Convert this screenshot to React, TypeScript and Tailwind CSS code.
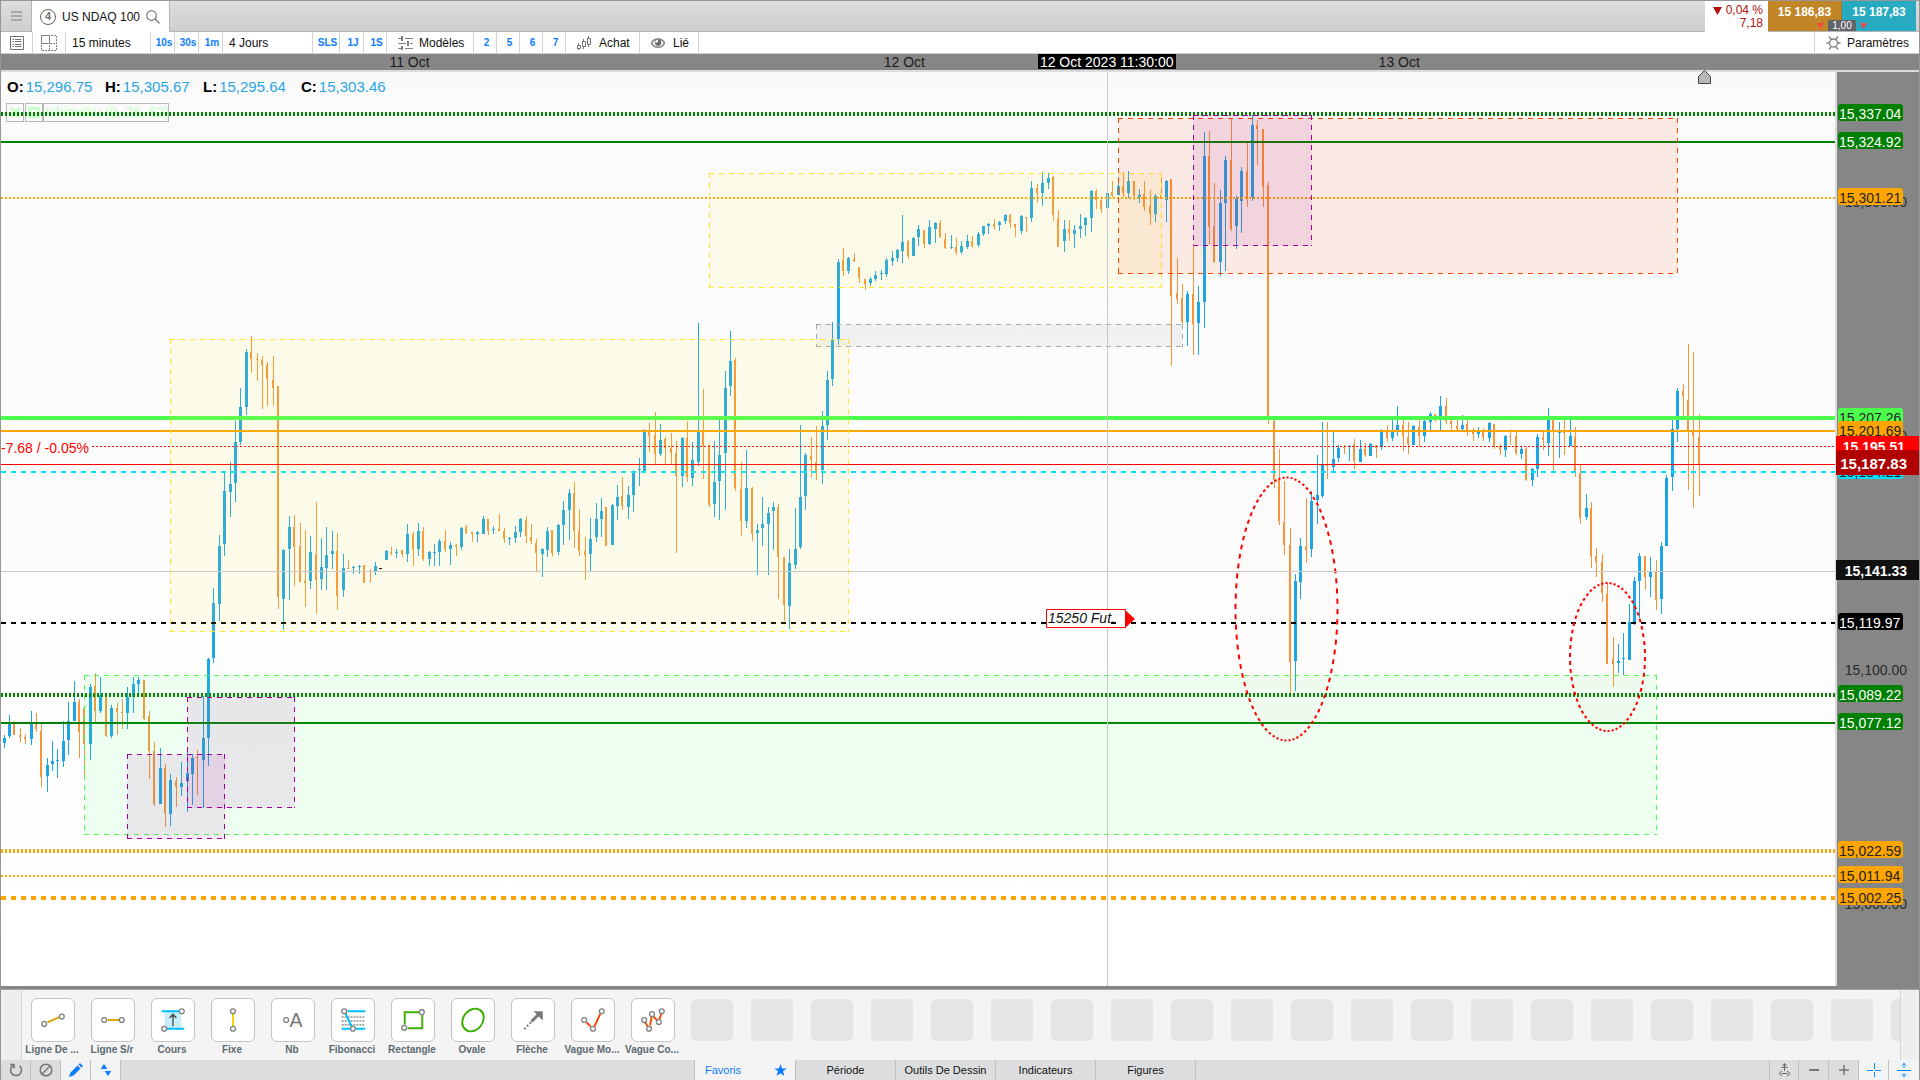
import React from "react";

type Group = { x: number; y: number; sx: number; bars: string };

/* Price bars. Each entry is "direction time high low bodyTop bodyBottom",
   in subunits (three per pixel) from the origin of its group. */
const GROUPS: Group[] = [
  {
    x: 0,
    y: 640,
    sx: 3,
    bars: `U 13 285 323 294 309,U 28 225 293 249 288,D 43 243 285 249 285,D 61 264 306 285 291,D 76 282 312 291 297,
U 94 213 315 249 297,D 109 219 276 249 267,D 124 249 441 273 411,U 142 354 456 375 408,U 157 303 393 363 372,
U 172 327 414 360 363,U 190 243 381 303 363,U 205 186 345 243 300,U 223 123 243 186 243,D 238 177 354 186 276,
D 253 200 414 205 312,U 271 132 360 141 312,D 286 99 247 138 213,U 301 111 219 165 213,D 319 171 291 171 288,
U 334 195 294 204 288,D 352 189 285 204 216,D 367 177 267 216 219,U 382 141 267 171 219,U 400 111 219 132 171,
U 415 111 159 120 132,D 433 120 240 120 237,D 448 213 417 228 333,D 463 306 498 333 492,U 481 324 492 384 492,
D 496 372 561 384 519,U 511 402 558 420 522,D 529 411 501 423 441,U 544 366 468 429 441,U 562 333 516 399 423,
U 577 343 495 354 402,D 592 330 465 351 354,U 610 168 504 294 360,U 625 54 378 57 294`,
  },
  {
    x: 0,
    y: 320,
    sx: 3,
    bars: `U 640 804 1029 849 1014,U 658 645 903 678 852,U 673 456 708 513 672,U 691 426 591 492 516,U 706 303 546 366 489,
U 721 204 375 261 366,U 739 87 285 96 261,D 754 48 159 96 117,D 772 99 183 117 120,D 787 108 267 120 135,
D 802 126 258 135 177,D 820 108 258 180 204,D 835 198 867 198 831,U 850 687 930 690 837,U 868 588 840 621 687,
D 883 585 798 621 681,D 901 609 786 678 786,D 916 630 861 783 789,U 931 648 807 696 783,D 949 546 882 702 780,
U 964 654 810 741 777,U 979 621 810 705 744,U 997 633 747 693 702,D 1012 639 870 693 828,U 1030 702 831 744 810,
D 1045 720 747 744 747,U 1060 738 762 741 744,U 1078 735 762 738 741,D 1093 735 789 735 789,D 1111 747 786 783 786,
U 1126 726 765 738 753,N 1141 744 747 744 747,U 1159 690 720 693 720,D 1174 681 705 696 699,U 1189 687 714 696 699,
D 1207 690 711 690 702,U 1222 612 726 642 702,D 1240 636 738 642 687,U 1255 609 708 633 687,D 1270 621 723 633 717,
U 1288 693 738 696 717,U 1303 672 738 696 699,U 1318 657 738 663 696,D 1336 630 696 663 687,U 1351 666 735 675 687,
D 1369 672 708 675 681,U 1384 621 690 624 681,D 1399 615 642 621 639,D 1417 636 666 636 642,U 1432 633 666 636 642`,
  },
  {
    x: 400,
    y: 300,
    sx: 3,
    bars: `U 250 648 702 657 702,D 265 657 705 657 693,U 280 678 702 687 690,D 298 642 693 687 693,D 313 684 729 693 717,
U 328 711 735 714 717,U 346 678 729 696 714,U 361 654 711 657 696,D 379 648 729 660 708,D 394 672 732 711 723,
D 409 717 816 729 759,U 427 744 831 747 762,U 442 681 771 693 750,D 457 690 768 690 759,U 475 672 765 675 756,
U 490 603 735 630 675,U 508 567 720 579 630,D 523 546 744 579 693,D 538 627 768 693 753,D 556 711 840 753 765,
U 571 654 816 717 762,U 589 609 726 657 711,U 604 594 711 633 657,D 619 621 738 621 738,U 637 612 735 615 735,
U 652 555 660 591 618,D 667 531 630 588 618,U 685 558 657 585 621,U 700 510 636 513 585,U 718 474 558 507 510,
U 733 387 516 393 516,D 748 369 456 393 408,D 766 336 495 405 462,U 781 372 468 420 462,D 796 411 495 417 444,
D 814 399 495 444 459,D 829 423 759 459 528,U 847 411 561 414 528,D 862 363 546 414 531,U 877 426 558 480 534,
U 895 69 498 396 486,D 910 267 537 396 438,D 928 432 621 435 615,U 943 423 651 546 612,U 958 354 660 465 543,
U 976 213 630 264 459,U 991 93 288 183 258,D 1006 174 573 180 564,D 1024 486 708 567 663,U 1039 450 684 564 663,
D 1057 561 723 564 702,U 1072 672 825 690 699,U 1087 591 738 672 684,U 1105 621 825 639 672,U 1120 606 750 621 633,
D 1135 612 897 621 771,D 1153 771 963 771 915,U 1168 747 987 789 918,U 1186 624 807 747 795,U 1201 375 747 591 741,
U 1216 459 630 465 588,D 1234 411 531 468 480,D 1249 378 540 486 516,U 1267 333 552 378 510,U 1282 213 420 240 375,
U 1297 66 258 120 237,U 1315 -123 135 -114 117`,
  },
  {
    x: 680,
    y: 150,
    sx: 2.8,
    bars: `D 457 294 378 330 363,U 472 321 372 324 363,D 488 309 336 327 333,D 502 351 399 351 384,D 519 387 420 387 402,
U 533 381 408 387 399,U 547 363 393 375 387,U 564 360 390 369 372,U 578 324 381 330 372,U 595 303 348 324 333,
U 609 297 336 300 324,U 623 195 339 276 303,D 639 270 327 273 318,U 654 261 318 264 318,U 668 225 288 237 261,
D 684 240 294 240 282,U 699 210 285 231 282,U 715 216 279 219 237,D 729 210 264 219 261,D 743 249 297 267 294,
U 760 255 297 291 294,D 774 264 315 291 306,U 788 273 312 288 306,U 805 255 297 273 291,D 819 258 294 273 288,
U 835 246 291 252 285,U 850 228 258 228 252,U 864 219 252 222 228,D 880 207 240 222 231,U 894 213 243 216 225,
U 911 192 222 195 213,D 925 192 234 195 219,D 939 222 261 222 231,U 956 195 252 198 243,D 970 201 246 201 204,
U 984 93 216 114 204,D 1001 102 159 114 129,U 1015 66 168 99 129,U 1031 69 117 84 99,D 1045 78 213 81 195,
D 1059 180 291 204 291,U 1076 210 306 237 273,D 1090 210 273 237 249,U 1104 225 294 240 252,U 1121 192 264 228 237,
U 1135 201 258 204 225,U 1152 120 246 123 204,D 1166 117 177 123 150,D 1180 138 189 150 177,U 1197 128 174 129 174`,
  },
  {
    x: 1100,
    y: 90,
    sx: 3,
    bars: `D 37 273 321 306 318,U 55 262 315 288 315,D 70 246 321 288 309,U 85 243 324 273 309,D 103 273 330 273 318,
U 118 297 339 315 321,D 133 273 363 312 351,D 151 300 405 348 372,U 166 312 396 318 372,D 184 264 327 315 327,
U 199 270 396 273 330,D 214 267 828 267 618,D 232 504 642 609 627,D 247 582 715 624 696,U 262 603 768 612 696,
D 280 462 795 612 702,U 295 588 795 636 699,U 313 126 714 198 636,D 328 123 462 198 411,D 343 279 519 408 516,
U 361 300 558 339 516,U 376 198 543 210 339,D 394 85 423 210 417,U 409 318 477 327 408,U 424 231 429 243 333,
D 442 159 351 243 324,U 457 76 333 105 321,D 472 90 225 105 117,D 490 117 351 117 291,D 505 276 1002 285 978`,
  },
  {
    x: 1220,
    y: 370,
    sx: 3,
    bars: `D 163 150 354 153 330,D 178 237 465 327 453,D 193 333 555 456 525,D 211 474 969 525 876,U 226 612 963 633 873,
U 241 504 687 528 636,D 259 384 579 528 540,U 274 363 561 393 537,U 292 255 462 375 390,U 307 156 384 285 378,
D 322 156 327 282 288,U 340 183 306 267 291,U 355 225 276 234 264,D 373 225 252 231 234,U 388 225 273 228 231,
D 403 207 297 222 273,U 421 210 276 237 276,D 436 219 261 237 255,U 451 219 258 222 258,D 469 225 264 225 234,
U 484 177 240 183 231,D 502 165 216 183 204,U 517 150 213 183 204,U 532 108 198 165 183,D 550 150 243 165 198,
D 565 156 252 201 222,U 580 165 225 168 225,D 598 150 231 171 198,U 613 150 216 153 198,U 631 126 180 132 156,
D 646 132 156 132 141,U 661 78 183 108 141,D 679 84 162 108 153,D 694 150 180 153 162,D 712 150 180 168 177,
U 727 135 180 165 177,D 742 150 198 162 183,D 760 174 213 183 192,U 775 171 204 186 192,D 790 174 213 183 201,
U 808 156 216 159 204,D 823 162 237 162 228,D 841 222 255 228 240,U 856 195 261 198 240,D 871 177 225 198 201,
D 889 183 255 198 249,U 904 231 267 237 252,D 919 231 333 237 330,U 937 294 348 297 330,U 952 192 321 201 297,
D 970 180 240 201 210,U 985 114 258 150 219,D 1000 150 303 150 180,U 1018 156 264 186 189,D 1033 150 255 180 190,
U 1051 150 228 198 228,D 1066 171 321 201 303,D 1081 285 462 309 444,U 1099 372 450 414 441,D 1114 396 594 414 561,
D 1129 534 621 558 576,D 1147 552 696 576 669,D 1162 639 882 672 882,D 1180 801 951 867 882,U 1195 822 909 873 879,
U 1210 789 915 864 867,U 1228 702 870 756 870,U 1243 621 765 633 759`,
  },
  {
    x: 1500,
    y: 330,
    sx: 3,
    bars: `U 418 669 864 678 753,D 436 678 780 678 741,U 451 681 801 726 741,D 469 690 840 726 810,U 484 636 852 648 807,
U 499 435 648 444 648,U 517 270 483 297 441,U 532 174 336 183 297,D 550 162 258 183 198,D 565 42 480 210 300,
D 580 66 534 300 318,D 598 252 498 321 405`,
  },
];

const COLORS: Record<string, string> = { U: "#1ea6e4", D: "#f7943a", N: "#000000" };

const CANDLES = GROUPS.flatMap((g) =>
  g.bars.split(",").map((entry) => {
    const [dir, ...n] = entry.trim().split(" ");
    const [t, hi, lo, top, bot] = n.map(Number);
    const y = (v: number) => g.y + Math.round(v / 3);
    return { dir, x: g.x + Math.floor(t / g.sx), hi: y(hi), lo: y(lo), top: y(top), bot: y(bot) };
  })
);

const LINES = [
  { y: 114, w: 4, c: "#008000", dash: "2 2" },
  { y: 142, w: 2, c: "#008000" },
  { y: 198, w: 2, c: "#ffa500", dash: "2 2" },
  { y: 418, w: 4, c: "#4dff4d" },
  { y: 431, w: 2, c: "#ffa500" },
  { y: 446.5, w: 1, c: "#ff0000", dash: "2 2", x: 92 },
  { y: 464.5, w: 1, c: "#ff0000" },
  { y: 472, w: 2, c: "#00e1ff", dash: "5 5" },
  { y: 623, w: 2, c: "#000000", dash: "5 5" },
  { y: 695, w: 4, c: "#008000", dash: "2 2" },
  { y: 723, w: 2, c: "#008000" },
  { y: 851, w: 4, c: "#ffa500", dash: "2 2" },
  { y: 876, w: 2, c: "#ffa500", dash: "2 2" },
  { y: 898, w: 4, c: "#ffa500", dash: "5 5" },
];

const ZONES = [
  { x: 816, y: 324, r: 1182, b: 346, c: "#a8a8a8", f: "rgba(150,150,150,0.1)" },
  { x: 170, y: 339, r: 848, b: 631, c: "#ffe82a", f: "rgba(255,240,70,0.1)" },
  { x: 709, y: 173, r: 1161, b: 287, c: "#ffe82a", f: "rgba(255,240,70,0.1)" },
  { x: 1118, y: 118, r: 1677, b: 273, c: "#ff4500", f: "rgba(255,69,0,0.09)" },
  { x: 84, y: 675, r: 1656, b: 834, c: "#4dff4d", f: "rgba(77,250,110,0.09)" },
  { x: 1193, y: 115, r: 1311, b: 245, c: "#a000a0", f: "rgba(160,0,180,0.09)" },
  { x: 187, y: 697, r: 294, b: 807, c: "#a000a0", f: "rgba(180,0,170,0.09)" },
  { x: 127, y: 754, r: 224, b: 838, c: "#a000a0", f: "rgba(180,0,170,0.09)" },
];

function dottedEllipse(cx: number, cy: number, rx: number, ry: number, count: number) {
  const step = (Math.PI * 2) / count;
  let d = "";
  for (let i = 0; i < count; i++) {
    const a = i * step;
    const b = a + step / 2;
    d += `M${(cx + rx * Math.cos(a)).toFixed(1)} ${(cy + ry * Math.sin(a)).toFixed(1)}L${(cx + rx * Math.cos(b)).toFixed(1)} ${(cy + ry * Math.sin(b)).toFixed(1)}`;
  }
  return d;
}

const ELLIPSES = [
  { cx: 1286.5, cy: 609, rx: 51, ry: 131.5, n: 80 },
  { cx: 1607.5, cy: 657, rx: 37.5, ry: 74, n: 58 },
];

function Chart() {
  return (
    <svg
      className="absolute inset-0 h-full w-full overflow-visible"
      viewBox="1 72 1834 914"
      preserveAspectRatio="none"
      role="img"
      aria-label="US NDAQ 100, 15 minutes"
    >
      <g shapeRendering="crispEdges">
        {CANDLES.map((k, i) => (
          <g key={i} fill={COLORS[k.dir]}>
            <rect x={k.x} y={k.hi} width={1} height={k.lo - k.hi} />
            <rect x={k.x - 1} y={k.top} width={k.dir === "D" ? 2 : 3} height={Math.max(1, k.bot - k.top)} />
          </g>
        ))}
        {LINES.map((l, i) => (
          <line key={i} x1={l.x ?? 1} x2={1835} y1={l.y} y2={l.y} stroke={l.c} strokeWidth={l.w} strokeDasharray={l.dash} />
        ))}
        {ZONES.map((z, i) => (
          <g key={i}>
            <rect x={z.x} y={z.y} width={z.r - z.x + 1} height={z.b - z.y + 1} fill={z.f} />
            <path
              d={`M${z.x} ${z.y + 0.5}H${z.r + 1}M${z.x} ${z.b + 0.5}H${z.r + 1}M${z.x + 0.5} ${z.y}V${z.b + 1}M${z.r + 0.5} ${z.y}V${z.b + 1}`}
              fill="none"
              stroke={z.c}
              strokeDasharray="5 5"
            />
          </g>
        ))}
      </g>
      {ELLIPSES.map((e) => (
        <g key={e.cx}>
          <ellipse cx={e.cx} cy={e.cy} rx={e.rx} ry={e.ry} fill="rgba(255,0,0,0.012)" />
          <path d={dottedEllipse(e.cx, e.cy, e.rx, e.ry, e.n)} stroke="#ff0000" strokeWidth={2} fill="none" />
        </g>
      ))}
      <path d="M1107.5 72V986M1 571.5H1835" stroke="#c8c8c8" fill="none" shapeRendering="crispEdges" />
      <path d="M1046.5 609.5H1125.5V627.5H1046.5Z" fill="#fff" stroke="#ff0000" />
      <path d="M1111 623H1116" stroke="#000" strokeWidth={2} shapeRendering="crispEdges" />
      <path d="M1125 610L1135 619L1125 628Z" fill="#ff0000" />
      <text x={1048} y={623} fontSize={14} fontStyle="italic" fill="#111">15250 Fut.</text>
      <text x={1} y={453} fontSize={14} fill="#ff0000">-7.68 / -0.05%</text>
      <path d="M1698.5 76.5L1704.5 70.5L1710.5 76.5V83.5H1698.5Z" fill="#b8b8b8" stroke="#444" />
    </svg>
  );
}

const pct = (y: number) => `${((y - 72) / 914) * 100}%`;

const TICKS = [
  { y: 202, t: "15,300.00" },
  { y: 436, t: "15,200.00" },
  { y: 670, t: "15,100.00" },
  { y: 904, t: "15,000.00" },
];

const TAGS = [
  { y: 104, t: "15,337.04", c: "bg-[#008000] text-white" },
  { y: 132, t: "15,324.92", c: "bg-[#008000] text-white" },
  { y: 188, t: "15,301.21", c: "bg-[#ffa500] text-[#222222]" },
  { y: 408, t: "15,207.26", c: "bg-[#4dff4d] text-[#222222]" },
  { y: 421, t: "15,201.69", c: "bg-[#ffa500] text-[#222222]" },
  { y: 462, t: "15,184.21", c: "bg-[#00e1ff] text-[#222222]" },
  { y: 613, t: "15,119.97", c: "bg-black text-white" },
  { y: 685, t: "15,089.22", c: "bg-[#008000] text-white" },
  { y: 713, t: "15,077.12", c: "bg-[#008000] text-white" },
  { y: 841, t: "15,022.59", c: "bg-[#ffa500] text-[#222222]" },
  { y: 866, t: "15,011.94", c: "bg-[#ffa500] text-[#222222]" },
  { y: 888, t: "15,002.25", c: "bg-[#ffa500] text-[#222222]" },
];

function PriceAxis() {
  return (
    <div className="relative w-21 shrink-0 border-l-2 border-[#dcdcdc] bg-[#868686] text-sm">
      {TICKS.map((k) => (
        <span key={k.t} className="absolute right-3 -mt-2 leading-4 text-[#2a2a2a]" style={{ top: pct(k.y) }}>
          {k.t}
        </span>
      ))}
      {TAGS.map((k) => (
        <span
          key={k.t}
          className={"absolute left-px h-[17px] w-[65px] rounded-[3px] pl-px leading-5 " + k.c}
          style={{ top: pct(k.y) }}
        >
          {k.t}
        </span>
      ))}
      <span
        className="absolute -left-px right-0 h-5 bg-[#ff0000] pr-3.5 text-right font-bold leading-[22px] text-white"
        style={{ top: pct(436) }}
      >
        15,195.51
      </span>
      <span
        className="absolute -left-px right-0 h-[25px] rounded-t-[3px] bg-[#b00000] pr-3 text-right text-[15px] font-bold leading-[27px] text-white"
        style={{ top: pct(450) }}
      >
        15,187.83
      </span>
      <span
        className="absolute -left-px right-0 h-5 bg-[#111111] pr-3 text-right font-bold leading-[22px] text-white"
        style={{ top: pct(560) }}
      >
        15,141.33
      </span>
    </div>
  );
}

function Ohlc({ k, v }: { k: string; v: string }) {
  return (
    <div className="flex w-[98px] gap-0.5">
      <b>{k}:</b>
      <span className="text-[#2aa5e0]">{v}</span>
    </div>
  );
}

const CELL = "flex h-full shrink-0 items-center border-r border-[#d4d4d4] ";
const QUICK = CELL + "justify-center pl-[3px] text-[10px] font-bold text-[#0a7cff] ";

function Toolbar() {
  return (
    <div className="flex h-[22px] items-center border-b border-[#d0d0d0] bg-white text-xs text-[#111111]">
      <button className={CELL + "w-8 justify-center"} aria-label="Liste">
        <svg width="14" height="14" viewBox="0 0 14 14" fill="none" stroke="#707070">
          <path d="M.5 .5H13.5V13.5H.5Z" />
          <path d="M5 3.5H11.5M5 5.5H11.5M5 8.5H11.5M5 10.5H11.5" />
          <path d="M2.5 3.5H4M2.5 5.5H4M2.5 8.5H4M2.5 10.5H4" />
        </svg>
      </button>
      <button className={CELL + "w-[33px] justify-center"} aria-label="Disposition">
        <svg width="16" height="16" viewBox="0 0 16 16" fill="none" stroke="#808080">
          <path d="M.5 .5H8.5V8.5H.5Z" />
          <path d="M10 .5H15.5V8.5H8.5M.5 10V15.5H15.5V8.5M8.5 10V15" strokeDasharray="2 1" />
        </svg>
      </button>
      <button className={CELL + "w-[85px] pl-1.5"}>15 minutes</button>
      <button className={QUICK + "w-6"}>10s</button>
      <button className={QUICK + "w-6"}>30s</button>
      <button className={QUICK + "w-6"}>1m</button>
      <button className={CELL + "w-[90px] pl-1.5"}>4 Jours</button>
      <button className={QUICK + "w-[27px]"}>SLS</button>
      <button className={QUICK + "w-6"}>1J</button>
      <button className={QUICK + "w-[23px]"}>1S</button>
      <button className={CELL + "w-[87px] gap-1.5 pl-[11px]"}>
        <svg width="15" height="14" viewBox="0 0 15 14" fill="none" stroke="#808080">
          <path d="M0 2.5H3M7 2.5H15M0 7.5H8M12 7.5H15M0 12.5H3M7 12.5H15" />
          <path d="M4 0V5M10 5V10M4 10V14" strokeWidth="2" />
        </svg>
        Modèles
      </button>
      <button className={QUICK + "w-[23px]"}>2</button>
      <button className={QUICK + "w-[23px]"}>5</button>
      <button className={QUICK + "w-[23px]"}>6</button>
      <button className={QUICK + "w-[23px]"}>7</button>
      <button className={CELL + "w-[74px] gap-2 pl-[11px]"}>
        <svg width="14" height="14" viewBox="0 0 14 14" fill="none" stroke="#707070">
          <path d="M.5 9.5H3.5V12.5H.5ZM5.5 5.5H8.5V10.5H5.5ZM10.5 2.5H13.5V8.5H10.5ZM1.5 7V9.500M1.500 12.500V14M6.500 3V5.500M6.500 10.500V13M11.500 0V2.500M11.500 8.500V11" />
        </svg>
        Achat
      </button>
      <button className={CELL + "w-[59px] gap-2 pl-[11px]"}>
        <svg width="14" height="12" viewBox="0 0 14 12" fill="none" stroke="#808080">
          <path d="M.5 6C3 .5 11 .5 13.5 6C11 11.5 3 11.5 .5 6Z" strokeWidth="1.500" />
          <circle cx="7" cy="5.5" r="3" fill="#606060" />
          <path d="M7 5.5V2.8A2.7 2.7 0 0 0 4.3 5.5Z" fill="#fff" stroke="none" />
        </svg>
        Lié
      </button>
      <div className="flex-1" />
      <button className="flex h-full items-center gap-1.5 border-l border-[#d4d4d4] pl-[11px] pr-2.5">
        <svg width="15" height="14" viewBox="0 0 15 14" fill="none" stroke="#808080" strokeWidth="1.3">
          <circle cx="7.5" cy="7" r="4" />
          <path d="M3 .5L5.3 3.5M12 .5L9.7 3.5M.5 7H3.5M11.5 7H14.5M3 13.5L5.3 10.5M12 13.5L9.7 10.5" />
        </svg>
        Paramètres
      </button>
    </div>
  );
}

function Header() {
  return (
    <header className="flex h-[31px] border-b border-[#b4b4b4] bg-linear-to-b from-[#dddddd] to-[#cfcfcf] pr-[3px]">
      <button className="flex w-[31px] items-center justify-center border-r border-[#b4b4b4]" aria-label="Menu">
        <svg width="11" height="10" viewBox="0 0 11 10" stroke="#a8a8a8" strokeWidth="2">
          <path d="M0 1H11M0 5H11M0 9H11" />
        </svg>
      </button>
      <div className="-mb-px flex w-[138px] items-center border-r border-[#b4b4b4] bg-white pl-2 text-xs text-[#111111]">
        <span className="mr-1.5 flex size-4 shrink-0 items-center justify-center rounded-full border border-[#606060] text-[11px] font-bold text-[#707070]">
          4
        </span>
        <span className="whitespace-nowrap">US NDAQ 100</span>
        <button className="ml-1.5" aria-label="Rechercher">
          <svg width="14" height="14" viewBox="0 0 14 14" fill="none" stroke="#777" strokeWidth="1.2">
            <circle cx="5.5" cy="5.5" r="4.8" />
            <path d="M9 9L13.5 13.5" />
          </svg>
        </button>
      </div>
      <div className="flex-1" />
      <div className="-mb-px w-[63px] bg-white pr-[5px] text-right text-xs leading-[13px] text-[#b01010]">
        <div className="mt-[3px] flex items-center justify-end gap-1">
          <svg width="9" height="8" viewBox="0 0 9 8" fill="#b01010">
            <path d="M0 0H9L4.5 8Z" />
          </svg>
          0,04 %
        </div>
        <div>7,18</div>
      </div>
      <div className="relative flex text-xs font-bold text-white">
        <button className="flex w-[74px] justify-center border-r border-[#a87420] bg-[#c28628] pt-[3px] leading-4">15 186,83</button>
        <button className="flex w-[74px] justify-center bg-[#28aac0] pt-[3px] leading-4">15 187,83</button>
        <span className="absolute bottom-0 left-1/2 h-[11px] w-7 -translate-x-1/2 rounded-t-xs bg-[#606468] text-center text-[10px] font-normal leading-[11px]">
          1,00
        </span>
        <svg className="absolute bottom-0.5 left-12 h-1.5 w-[52px]" viewBox="0 0 52 6" fill="#f04848">
          <path d="M1 0H8L4.500 6ZM44 0H51L47.500 6Z" />
        </svg>
      </div>
    </header>
  );
}

function TimeAxis() {
  return (
    <div className="relative h-4 bg-[#868686] text-sm leading-[17px] text-[#1c1c1c]">
      <span className="absolute left-[21.300%] -translate-x-1/2">11 Oct</span>
      <span className="absolute left-[47.100%] -translate-x-1/2">12 Oct</span>
      <span className="absolute left-[72.900%] -translate-x-1/2">13 Oct</span>
      <span className="absolute left-[57.650%] h-[15px] w-[138px] -translate-x-1/2 whitespace-nowrap bg-black text-center leading-4 text-white">
        12 Oct 2023 11:30:00
      </span>
    </div>
  );
}

const dot = (x: number, y: number) => <circle cx={x} cy={y} r="2.5" fill="#fff" stroke="#808080" strokeWidth="1.3" />;

const TOOLS: { name: string; icon: React.ReactNode }[] = [
  { name: "Ligne De ...", icon: (<><path d="M16 24L29 18" stroke="#dba400" strokeWidth="2" />{dot(12.5, 25.5)}{dot(30.5, 18)}</>) },
  { name: "Ligne S/r", icon: (<><path d="M16 21.500H28" stroke="#dba400" strokeWidth="2" />{dot(12.5, 21.5)}{dot(30.5, 21.5)}</>) },
  {
    name: "Cours",
    icon: (
      <>
        <path d="M13 13H30V30H13Z" fill="#c8eefc" />
        <path d="M10 12.500H28M14 30.500H33" stroke="#00bfff" strokeWidth="2" />
        <path d="M21.500 28V16M18 19.500L21.500 15.500L25 19.500" stroke="#555" strokeWidth="1.500" />
        {dot(30.5, 12.5)}
        {dot(12.5, 30.5)}
      </>
    ),
  },
  { name: "Fixe", icon: (<><path d="M21.500 15V28" stroke="#ffcc00" strokeWidth="2" />{dot(21.5, 12.5)}{dot(21.5, 30.5)}</>) },
  {
    name: "Nb",
    icon: (
      <>
        {dot(14.5, 21.5)}
        <text x="18" y="29" fontSize="20" fill="#777" stroke="none">A</text>
      </>
    ),
  },
  {
    name: "Fibonacci",
    icon: (
      <>
        <path d="M10 18.500H34M10 22.500H34M10 26.500H34" stroke="#555" strokeDasharray="2 1" />
        <path d="M16 12.500H34M10 30.500H34" stroke="#00bfff" strokeWidth="2" />
        <path d="M13 13L21 30" stroke="#00bfff" strokeWidth="2" />
        {dot(12.5, 12.5)}
        {dot(21.5, 30.5)}
      </>
    ),
  },
  { name: "Rectangle", icon: (<><path d="M28 13.500H13V26M16 30H31V16" stroke="#3cb000" strokeWidth="2" />{dot(30.5, 13.5)}{dot(12.5, 29.5)}</>) },
  { name: "Ovale", icon: <ellipse cx="21.5" cy="21.500" rx="10" ry="12.500" transform="rotate(38 21.500 21.500)" stroke="#3cb000" strokeWidth="2" /> },
  {
    name: "Flèche",
    icon: (
      <>
        <path d="M12.500 31L21 22" stroke="#777" strokeWidth="2" strokeDasharray="2 2" />
        <path d="M20 23L28 15" stroke="#777" strokeWidth="3" />
        <path d="M22 12.500H31.500V22Z" fill="#777" />
      </>
    ),
  },
  { name: "Vague Mo...", icon: (<><path d="M15 24L19 28M23 28L29 15" stroke="#ff4500" strokeWidth="2" />{dot(12.5, 21.5)}{dot(21.5, 30.5)}{dot(30.5, 12.5)}</>) },
  {
    name: "Vague Co...",
    icon: (
      <>
        <path d="M13.500 24L16 28M18.500 27L20 18.500M22 18L25.500 21.500M28 20.500L30 15.500" stroke="#ff4500" strokeWidth="2" />
        {dot(12.5, 21.5)}
        {dot(17.5, 30.5)}
        {dot(20.5, 15.5)}
        {dot(27.5, 23.5)}
        {dot(30.5, 12.5)}
      </>
    ),
  },
];

function Toolbox() {
  return (
    <div className="flex h-[70px] bg-[#f4f4f4]">
      <div className="w-[21px] shrink-0 border-r border-[#d4d4d4] bg-[#eeeeee]" />
      <div className="flex min-w-0 flex-1 overflow-hidden pt-2">
        {TOOLS.map((t) => (
          <button key={t.name} className="flex w-15 shrink-0 flex-col items-center gap-0.5">
            <span className="ml-0.5 flex size-11 rounded-md border border-[#c4c4c4] bg-white">
              <svg width="42" height="42" viewBox="0 0 43 43" fill="none">
                {t.icon}
              </svg>
            </span>
            <span className="whitespace-nowrap text-[10px] font-bold leading-3 text-[#5c6a70]">{t.name}</span>
          </button>
        ))}
        {Array.from({ length: 21 }, (_, i) => (
          <div key={i} className="flex w-15 shrink-0 justify-center pt-px">
            <div className="size-[42px] rounded-md bg-[#e5e5e5]" />
          </div>
        ))}
      </div>
      <div className="w-[19px] shrink-0 border-l border-[#d4d4d4] bg-[#eeeeee]" />
    </div>
  );
}

const ICON = "flex w-[30px] items-center justify-center border-r border-[#bfc0c2] ";
const TAB = "flex w-[100px] items-center justify-center border-r border-[#bfc0c2] ";

function BottomBar() {
  return (
    <footer className="flex h-5 bg-[#dcddde] text-[11px] text-[#111111]">
      <button className={ICON} aria-label="Rétablir">
        <svg width="14" height="14" viewBox="0 0 14 14" fill="none" stroke="#777" strokeWidth="1.600">
          <path d="M10.500 2.800A5.500 5.500 0 1 1 4 2.500M1 1.500H5V5.500" />
        </svg>
      </button>
      <button className={ICON} aria-label="Effacer">
        <svg width="14" height="14" viewBox="0 0 14 14" fill="none" stroke="#777" strokeWidth="1.500">
          <circle cx="7" cy="7" r="5.800" />
          <path d="M3 11L11 3" />
        </svg>
      </button>
      <button className={ICON + "bg-[#f2f3f5]"} aria-label="Dessiner">
        <svg width="14" height="14" viewBox="0 0 14 14" fill="#0a7cff">
          <path d="M0 14L1.500 9.500L8.500 2.500L11.500 5.500L4.500 12.500ZM9.500 1.500L11 0L14 3L12.500 4.500Z" />
        </svg>
      </button>
      <button className={ICON + "bg-[#f2f3f5]"} aria-label="Déplacer">
        <svg width="10" height="12" viewBox="0 0 10 12" fill="#0a7cff">
          <path d="M0 4.500L3 0L6 4.500V5H0ZM4 7H10V7.500L7 12L4 7.500Z" />
        </svg>
      </button>
      <div className="flex-1" />
      <div className="flex">
        <button className="flex w-[102px] items-center justify-between border-x border-[#bfc0c2] bg-[#f4f4f4] pl-2.5 pr-2 text-[#0a7cff]">
          Favoris
          <svg width="13" height="12" viewBox="0 0 24 23" fill="#0a7cff">
            <path d="M12 0L15 8.500H24L16.800 13.800L19.500 23L12 17.500L4.500 23L7.200 13.800L0 8.500H9Z" />
          </svg>
        </button>
        <button className={TAB}>Période</button>
        <button className={TAB}>Outils De Dessin</button>
        <button className={TAB}>Indicateurs</button>
        <button className={TAB}>Figures</button>
      </div>
      <div className="flex-1" />
      <div className="flex">
        <button className={ICON + "border-l"} aria-label="Ajuster">
          <svg width="13" height="14" viewBox="0 0 13 14" fill="none" stroke="#666">
            <path d="M6.500 1V8M3.500 4.500H9.500M4.500 3L6.500 .5L8.500 3M3.500 10.500H9.500" />
            <path d="M4 8L1 10.500L4 13M9 8L12 10.500L9 13" />
          </svg>
        </button>
        <button className={ICON} aria-label="Zoom arrière">
          <svg width="10" height="10" viewBox="0 0 10 10" stroke="#777" strokeWidth="2">
            <path d="M0 5H10" />
          </svg>
        </button>
        <button className={ICON} aria-label="Zoom avant">
          <svg width="10" height="10" viewBox="0 0 10 10" stroke="#777" strokeWidth="1.500">
            <path d="M0 5H10M5 0V10" />
          </svg>
        </button>
        <button className={ICON + "bg-[#f2f3f5]"} aria-label="Réticule">
          <svg width="14" height="14" viewBox="0 0 14 14" stroke="#0a8cff">
            <path d="M0 7.500H6M8 7.500H14M7.500 0V6M7.500 9V14" />
          </svg>
        </button>
        <button className="flex w-[30px] items-center justify-center bg-[#f2f3f5]" aria-label="Ajustement vertical">
          <svg width="14" height="14" viewBox="0 0 14 14" fill="none" stroke="#0a8cff">
            <path d="M0 7.500H14M7 0V5M7 10V14M5 2.500L7 .5L9 2.500M5 11.500L7 13.500L9 11.500" />
          </svg>
        </button>
      </div>
    </footer>
  );
}

export default function App() {
  return (
    <div className="flex h-screen flex-col border-x border-t border-[#969696] bg-white font-['Liberation_Sans',Arial,sans-serif]">
      <Header />
      <Toolbar />
      <TimeAxis />
      <div className="h-0.5 bg-[#dcdcdc]" />
      <main className="flex min-h-0 flex-1">
        <div className="relative min-w-0 flex-1 bg-linear-to-b from-[#fafafa] to-white">
          <div className="flex pl-1.5 pt-1.5 text-[15px] leading-[18px] text-black">
            <Ohlc k="O" v="15,296.75" />
            <Ohlc k="H" v="15,305.67" />
            <Ohlc k="L" v="15,295.64" />
            <Ohlc k="C" v="15,303.46" />
          </div>
          <div className="ml-[5px] mt-[7px] flex h-[19px] text-sm leading-4 text-[#c8ffc8]">
            <button className="mr-px flex w-[18px] items-center justify-center border border-[#b8b8bc]" aria-label="Fermer">
              <svg width="11" height="11" viewBox="0 0 11 11" stroke="#c8ffc8" strokeWidth="3">
                <path d="M1 1L10 10M10 1L1 10" />
              </svg>
            </button>
            <button className="flex w-[18px] items-center justify-center border border-[#b8b8bc]" aria-label="Réduire">
              <span className="h-[11px] w-3 border-3 border-[#c8ffc8]" />
            </button>
            <span className="w-[126px] whitespace-nowrap border border-[#b8b8bc] pl-px">Ichimoku (9, 26, 52)</span>
          </div>
          <Chart />
        </div>
        <PriceAxis />
      </main>
      <div className="h-1 border-b border-[#a4a4a4] bg-[#868686]" />
      <Toolbox />
      <BottomBar />
    </div>
  );
}
